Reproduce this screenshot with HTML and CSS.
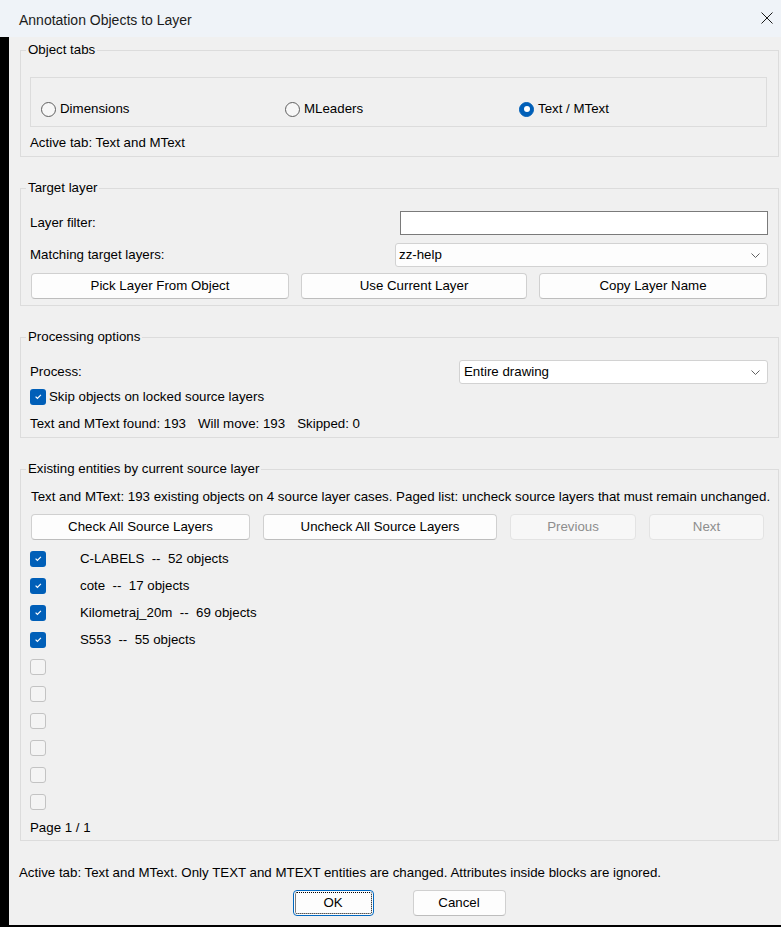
FILE: index.html
```html
<!DOCTYPE html>
<html lang="en">
<head>
    <meta charset="UTF-8">
    <meta name="viewport" content="width=device-width, initial-scale=1.0">
    <title>Annotation Objects to Layer</title>
    <link rel="stylesheet" href="styles.css">
</head>
<body>
<div class="titlebar">
    <span class="title">Annotation Objects to Layer</span>
    <svg class="close" width="12" height="12" viewBox="0 0 12 12"><path d="M0.5 0.5 L11.5 11.5 M11.5 0.5 L0.5 11.5" stroke="#1a1a1a" stroke-width="1"/></svg>
</div>
<div class="frame">
    <!-- object tabs -->
    <fieldset class="group">
        <legend>Object tabs</legend>
        <div class="radio-box">
            <label class="radio-item item-dim"><span class="radio"></span>Dimensions</label>
            <label class="radio-item item-mlead"><span class="radio"></span>MLeaders</label>
            <label class="radio-item"><span class="radio is-on"></span>Text / MText</label>
        </div>
        <p class="note">Active tab: Text and MText</p>
    </fieldset>

    <!-- target layer -->
    <fieldset class="group group-target">
        <legend>Target layer</legend>
        <div class="field-grid">
            <span>Layer filter:</span>
            <input class="textbox" type="text">
            <span>Matching target layers:</span>
            <div class="combo combo-layer">
                <span>zz-help</span>
                <svg width="9" height="5" viewBox="0 0 9 5"><path d="M0.5 0.5 L4.5 4.5 L8.5 0.5" fill="none" stroke="#606060"/></svg>
            </div>
        </div>
        <div class="btn-row">
            <button class="btn w-pick">Pick Layer From Object</button>
            <button class="btn w-use">Use Current Layer</button>
            <button class="btn w-copy">Copy Layer Name</button>
        </div>
    </fieldset>

    <!-- processing -->
    <fieldset class="group">
        <legend>Processing options</legend>
        <div class="field-grid">
            <span>Process:</span>
            <div class="combo combo-process">
                <span>Entire drawing</span>
                <svg width="9" height="5" viewBox="0 0 9 5"><path d="M0.5 0.5 L4.5 4.5 L8.5 0.5" fill="none" stroke="#606060"/></svg>
            </div>
        </div>
        <label class="check-row">
            <span class="check is-on"><svg width="16" height="16" viewBox="0 0 16 16"><path d="M5.6 7.6 L7.4 9.4 L10.9 5.9" fill="none" stroke="#fff" stroke-width="1.2"/></svg></span>
            Skip objects on locked source layers
        </label>
        <p class="note stats"><span>Text and MText found: 193</span><span>Will move: 193</span><span>Skipped: 0</span></p>
    </fieldset>

    <!-- existing entities -->
    <fieldset class="group group-list">
        <legend>Existing entities by current source layer</legend>
        <p class="note intro">Text and MText: 193 existing objects on 4 source layer cases. Paged list: uncheck source layers that must remain unchanged.</p>
        <div class="btn-row list-btns">
            <button class="btn w-check">Check All Source Layers</button>
            <button class="btn w-uncheck">Uncheck All Source Layers</button>
            <button class="btn w-prev" disabled>Previous</button>
            <button class="btn w-next" disabled>Next</button>
        </div>
        <ul class="layer-list">
            <li><span class="check is-on"><svg width="16" height="16" viewBox="0 0 16 16"><path d="M5.6 7.6 L7.4 9.4 L10.9 5.9" fill="none" stroke="#fff" stroke-width="1.2"/></svg></span><span class="layer-name">C-LABELS  --  52 objects</span></li>
            <li><span class="check is-on"><svg width="16" height="16" viewBox="0 0 16 16"><path d="M5.6 7.6 L7.4 9.4 L10.9 5.9" fill="none" stroke="#fff" stroke-width="1.2"/></svg></span><span class="layer-name">cote  --  17 objects</span></li>
            <li><span class="check is-on"><svg width="16" height="16" viewBox="0 0 16 16"><path d="M5.6 7.6 L7.4 9.4 L10.9 5.9" fill="none" stroke="#fff" stroke-width="1.2"/></svg></span><span class="layer-name">Kilometraj_20m  --  69 objects</span></li>
            <li><span class="check is-on"><svg width="16" height="16" viewBox="0 0 16 16"><path d="M5.6 7.6 L7.4 9.4 L10.9 5.9" fill="none" stroke="#fff" stroke-width="1.2"/></svg></span><span class="layer-name">S553  --  55 objects</span></li>
            <li><span class="check"></span></li>
            <li><span class="check"></span></li>
            <li><span class="check"></span></li>
            <li><span class="check"></span></li>
            <li><span class="check"></span></li>
            <li><span class="check"></span></li>
        </ul>
        <p class="note page">Page 1 / 1</p>
    </fieldset>

    <p class="footer-note">Active tab: Text and MText. Only TEXT and MTEXT entities are changed. Attributes inside blocks are ignored.</p>
    <div class="dialog-buttons">
        <button class="btn btn-ok">OK</button>
        <button class="btn btn-cancel">Cancel</button>
    </div>
</div>
</body>
</html>
```

FILE: styles.css
```css
*{
    box-sizing: border-box;
}
html,body{
    margin: 0;
    padding: 0;
}
body{
    width: 781px;
    height: 927px;
    overflow: hidden;
    background: #f0f0f0;
    font-family: "Liberation Sans", Arial, sans-serif;
    font-size: 13.3px;
    line-height: 16px;
    color: #000;
}
.titlebar{
    height: 37px;
    background: #eff3f8;
    display: flex;
    align-items: center;
    justify-content: space-between;
    padding: 3px 8px 0 19px;
}
.title{
    font-size: 14px;
    color: #1b1b1b;
}
.close{
    margin-top: -4px;
}
.frame{
    height: 890px;
    border-left: 9px solid #000;
    border-bottom: 2px solid #000;
    padding-top: 5px;
}

/* group boxes */
.group{
    margin: 23px 0 0 11px;
    width: 759px;
    min-width: 0;
    padding: 0 10px 5px 9px;
    border: 1px solid #dcdcdc;
}
.group:first-child{
    margin-top: 0;
}
.group legend{
    margin-left: -4px;
    padding: 0 2px;
    line-height: 16px;
}
.note{
    margin: 0;
    white-space: nowrap;
}

/* object tabs */
.radio-box{
    margin-top: 19px;
    height: 50px;
    border: 1px solid #dcdcdc;
    padding: 23px 0 0 10px;
    margin-right: 1px;
    display: flex;
    align-items: flex-start;
}
.radio-item{
    display: flex;
    align-items: center;
    gap: 4px;
    height: 16px;
}
.item-dim{
    width: 244px;
}
.item-mlead{
    width: 234px;
}
.radio{
    width: 15px;
    height: 15px;
    border-radius: 50%;
    border: 1px solid #5f5f5f;
    background: #f7f7f7;
    display: flex;
    align-items: center;
    justify-content: center;
}
.radio.is-on{
    border-color: #005fb8;
    background: #005fb8;
}
.radio.is-on::after{
    content: "";
    width: 6px;
    height: 6px;
    border-radius: 50%;
    background: #fff;
}
.radio-box + .note{
    margin-top: 8px;
}

/* target layer */
.field-grid{
    display: grid;
    grid-template-columns: 1fr auto;
    row-gap: 8px;
    align-items: center;
    margin-top: 15px;
}
.textbox{
    justify-self: end;
    width: 368px;
    height: 24px;
    margin: 0;
    border: 1px solid #7a7a7a;
    background: #fff;
    font: inherit;
}
.combo{
    justify-self: end;
    height: 24px;
    display: flex;
    align-items: center;
    justify-content: space-between;
    border: 1px solid #d2d2d2;
    border-radius: 3px;
    padding: 0 7px 0 3px;
    background: #fdfdfd;
}
.combo-layer{
    width: 373px;
}
.combo-process{
    width: 309px;
    background: #fff;
    padding-left: 4px;
}
.btn-row{
    display: flex;
    gap: 12px;
    margin-top: 6px;
    padding-left: 1px;
}
.group-target{
    padding-bottom: 6px;
}
.btn{
    height: 26px;
    margin: 0;
    padding: 0;
    border: 1px solid #d0d0d0;
    border-bottom-color: #bdbdbd;
    border-radius: 4px;
    background: #fdfdfd;
    font: inherit;
    color: #000;
}
.btn:disabled{
    background: #f7f7f7;
    border-color: #e3e3e3;
    color: #8d8d8d;
}
.w-pick{ width: 258px; }
.w-use{ width: 226px; }
.w-copy{ width: 228px; }

/* processing */
.check-row{
    display: flex;
    align-items: center;
    gap: 3px;
    margin-top: 5px;
}
.check{
    width: 16px;
    height: 16px;
    flex: none;
    border-radius: 3px;
    border: 1px solid #c3c3c3;
    background: #f4f4f4;
    display: block;
}
.check.is-on{
    border: none;
    background: #005fb8;
}
.check svg{
    display: block;
}
.stats{
    margin-top: 11px;
}
.stats span + span{
    margin-left: 12px;
}

/* existing entities */
.group-list{
    padding-bottom: 4px;
}
.intro{
    margin-top: 12px;
    margin-left: 1px;
}
.list-btns{
    margin-top: 9px;
    gap: 13px;
}
.w-check{ width: 219px; }
.w-uncheck{ width: 234px; }
.w-prev{ width: 126px; }
.w-next{ width: 115px; }
.layer-list{
    list-style: none;
    margin: 5px 0 0 0;
    padding: 0;
}
.layer-list li{
    height: 27px;
    display: flex;
    align-items: center;
    gap: 34px;
}
.layer-name{
    white-space: pre;
}
.page{
    margin-top: 5px;
}

/* footer */
.footer-note{
    margin: 24px 0 0 10px;
}
.dialog-buttons{
    display: flex;
    justify-content: center;
    gap: 39px;
    margin-top: 9px;
    padding-left: 8px;
}
.btn-ok{
    width: 81px;
    border-color: #0067c0;
    outline: 1px dotted #000;
    outline-offset: -3px;
}
.btn-cancel{
    width: 93px;
}
```
